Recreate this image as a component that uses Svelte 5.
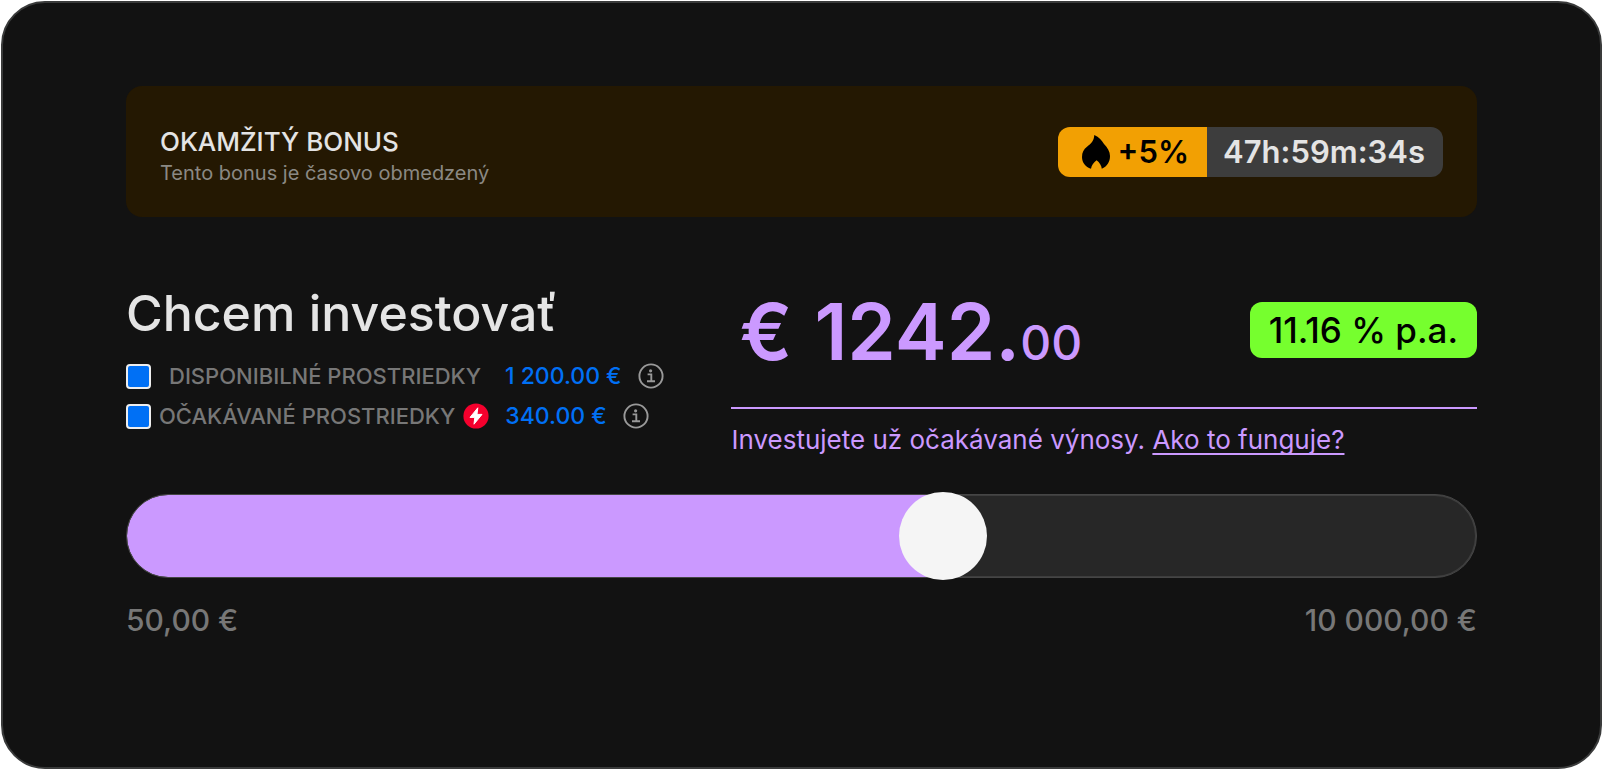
<script>
  let position = $state(612);
  let useAvailable = $state(true);
  let useExpected = $state(true);
</script>

{#snippet info(label)}
  <button class="info" type="button" aria-label={label}>
    <svg viewBox="0 0 26 26" width="26" height="26" aria-hidden="true">
      <circle cx="13" cy="13" r="11.6" fill="none" stroke="currentColor" stroke-width="1.9" />
      <circle cx="12.6" cy="7.8" r="1.6" fill="currentColor" />
      <path d="M9.6 11.4H13.3V18M9 18.2H17" fill="none" stroke="currentColor" stroke-width="1.9" />
    </svg>
  </button>
{/snippet}

<main class="card">
  <section class="bonus">
    <div class="bonus-text">
      <h2>OKAMŽITÝ BONUS</h2>
      <p>Tento bonus je časovo obmedzený</p>
    </div>
    <div class="offer">
      <span class="boost">
        <svg viewBox="0 0 28 34" width="28" height="34" aria-hidden="true">
          <path d="M12.3 0C17 2 20 5.500 22 9C25.500 12.500 28 16.500 28 21C28 27 25 31.500 19.800 33.800C19.600 30.500 17.500 27.500 14.600 25.200C11.800 27.400 9.500 30 9 33.800C3.500 32 0 27.500 0 22C0 17.500 1.600 14.500 5 11.800C9 8.600 12 6 12.300 0Z" />
        </svg>
        +5%
      </span>
      <time class="timer">47h:59m:34s</time>
    </div>
  </section>

  <section class="invest">
    <div class="sources">
      <h1>Chcem investovať</h1>
      <div class="source">
        <label class="wide"><input type="checkbox" bind:checked={useAvailable} />DISPONIBILNÉ PROSTRIEDKY</label>
        <span class="sum">1 200.00 €</span>
        {@render info('Disponibilné prostriedky')}
      </div>
      <div class="source">
        <label><input type="checkbox" bind:checked={useExpected} />OČAKÁVANÉ PROSTRIEDKY</label>
        <svg class="bolt" viewBox="0 0 26 26" width="26" height="26" aria-hidden="true">
          <circle cx="13" cy="13" r="12.6" fill="#f5002d" />
          <path d="M14.800 4.800L7 14.400H11.800L11 21.200L19 11.400H14Z" fill="#fff" stroke="#fff" stroke-width="1" stroke-linejoin="round" />
        </svg>
        <span class="sum">340.00 €</span>
        {@render info('Očakávané prostriedky')}
      </div>
    </div>

    <div class="result">
      <div class="figures">
        <output class="amount" for="amount"><span>€</span><span>1242.<small>00</small></span></output>
        <span class="rate">11.16 % p.a.</span>
      </div>
      <p class="note">Investujete už očakávané výnosy. <a href="#funguje">Ako to funguje?</a></p>
    </div>
  </section>

  <section class="range">
    <input
      id="amount"
      type="range"
      min="0"
      max="1000"
      bind:value={position}
      aria-label="Suma investície"
      style="--position: {position / 1000}"
    />
    <div class="limits"><span>50,00 €</span><span>10 000,00 €</span></div>
  </section>
</main>

<style>
  :global(body) {
    margin: 0;
    background: #fff;
  }
  .card {
    box-sizing: border-box;
    min-height: calc(100vh - 2px);
    margin: 1px;
    padding: 83px 123px;
    border: 2px solid #3a3b3b;
    border-radius: 44px;
    background: #121212;
    color: #e4e4e4;
    font-family: Inter, "Liberation Sans", sans-serif;
  }
  h1, h2, p {
    margin: 0;
    font-weight: 500;
  }
  .bonus {
    display: flex;
    align-items: center;
    justify-content: space-between;
    padding: 30px 34px;
    border-radius: 16px;
    background: #241802;
  }
  .bonus-text {
    padding-top: 8px;
  }
  h2 {
    font-size: 26px;
    line-height: 35px;
  }
  .bonus-text p {
    color: #8b8984;
    font-size: 20px;
    font-weight: 400;
    line-height: 28px;
  }
  .offer {
    display: flex;
    overflow: hidden;
    border-radius: 12px;
    font-size: 31px;
    font-weight: 600;
    line-height: 50px;
  }
  .boost {
    display: flex;
    align-items: center;
    gap: 8px;
    padding: 0 18px 0 24px;
    background: #f2a003;
    color: #000;
  }
  .timer {
    padding: 0 18px 0 16px;
    background: #3d3d3d;
  }
  .invest {
    display: grid;
    grid-template-columns: 605fr 745fr;
    margin-top: 66px;
  }
  h1 {
    margin-bottom: 13px;
    font-size: 50px;
    line-height: 60px;
  }
  .source {
    display: flex;
    align-items: center;
    height: 40px;
    color: #777;
    font-size: 22px;
    font-weight: 500;
  }
  label {
    display: flex;
    align-items: center;
    gap: 8px;
  }
  .wide {
    gap: 18px;
    padding-right: 8px;
  }
  input[type="checkbox"] {
    box-sizing: border-box;
    flex: none;
    width: 25px;
    height: 25px;
    margin: 0;
    border: 2px solid #eee;
    border-radius: 4px;
    appearance: none;
    background: #121212;
  }
  input[type="checkbox"]:checked {
    background: #0070f5;
  }
  .bolt {
    margin-left: 8px;
  }
  .sum {
    margin: 0 16px;
    color: #0070f5;
    font-size: 23px;
  }
  .info {
    display: flex;
    padding: 0;
    border: 0;
    background: none;
    color: #999;
  }
  .figures {
    display: flex;
    align-items: flex-start;
    justify-content: space-between;
    padding: 19px 0 34px 8px;
    border-bottom: 2px solid #cb99ff;
  }
  .amount {
    display: flex;
    gap: 22px;
    color: #cb99ff;
    font-size: 78px;
    font-weight: 600;
    line-height: 60px;
  }
  small {
    font-size: 48px;
    font-weight: 500;
  }
  .rate {
    padding: 0 19px;
    border-radius: 12px;
    background: #76ff2e;
    color: #000;
    font-size: 35px;
    font-weight: 500;
    line-height: 56px;
  }
  .note {
    padding-top: 13px;
    color: #cb99ff;
    font-size: 26px;
    font-weight: 400;
    line-height: 36px;
  }
  a {
    color: inherit;
    text-decoration-thickness: 2px;
    text-underline-offset: 4px;
    text-decoration-skip-ink: none;
  }
  .range {
    margin-top: 34px;
  }
  input[type="range"] {
    display: block;
    width: 100%;
    height: 88px;
    margin: 0;
    appearance: none;
    background: none;
  }
  input[type="range"]::-webkit-slider-runnable-track {
    box-sizing: border-box;
    height: 84px;
    padding: 1px;
    border: 1px solid #454545;
    border-radius: 42px;
    background:
      linear-gradient(#cb99ff, #cb99ff) 0 0 / calc(44px + (100% - 88px) * var(--position)) 100% no-repeat padding-box,
      linear-gradient(#272727, #272727) content-box,
      #3d3d3d;
  }
  input[type="range"]::-webkit-slider-thumb {
    width: 88px;
    height: 88px;
    margin-top: -4px;
    border: 0;
    border-radius: 50%;
    appearance: none;
    background: #f5f5f5;
  }
  .limits {
    display: flex;
    justify-content: space-between;
    margin-top: 22px;
    color: #777;
    font-size: 30px;
    font-weight: 500;
    line-height: 36px;
  }
</style>
